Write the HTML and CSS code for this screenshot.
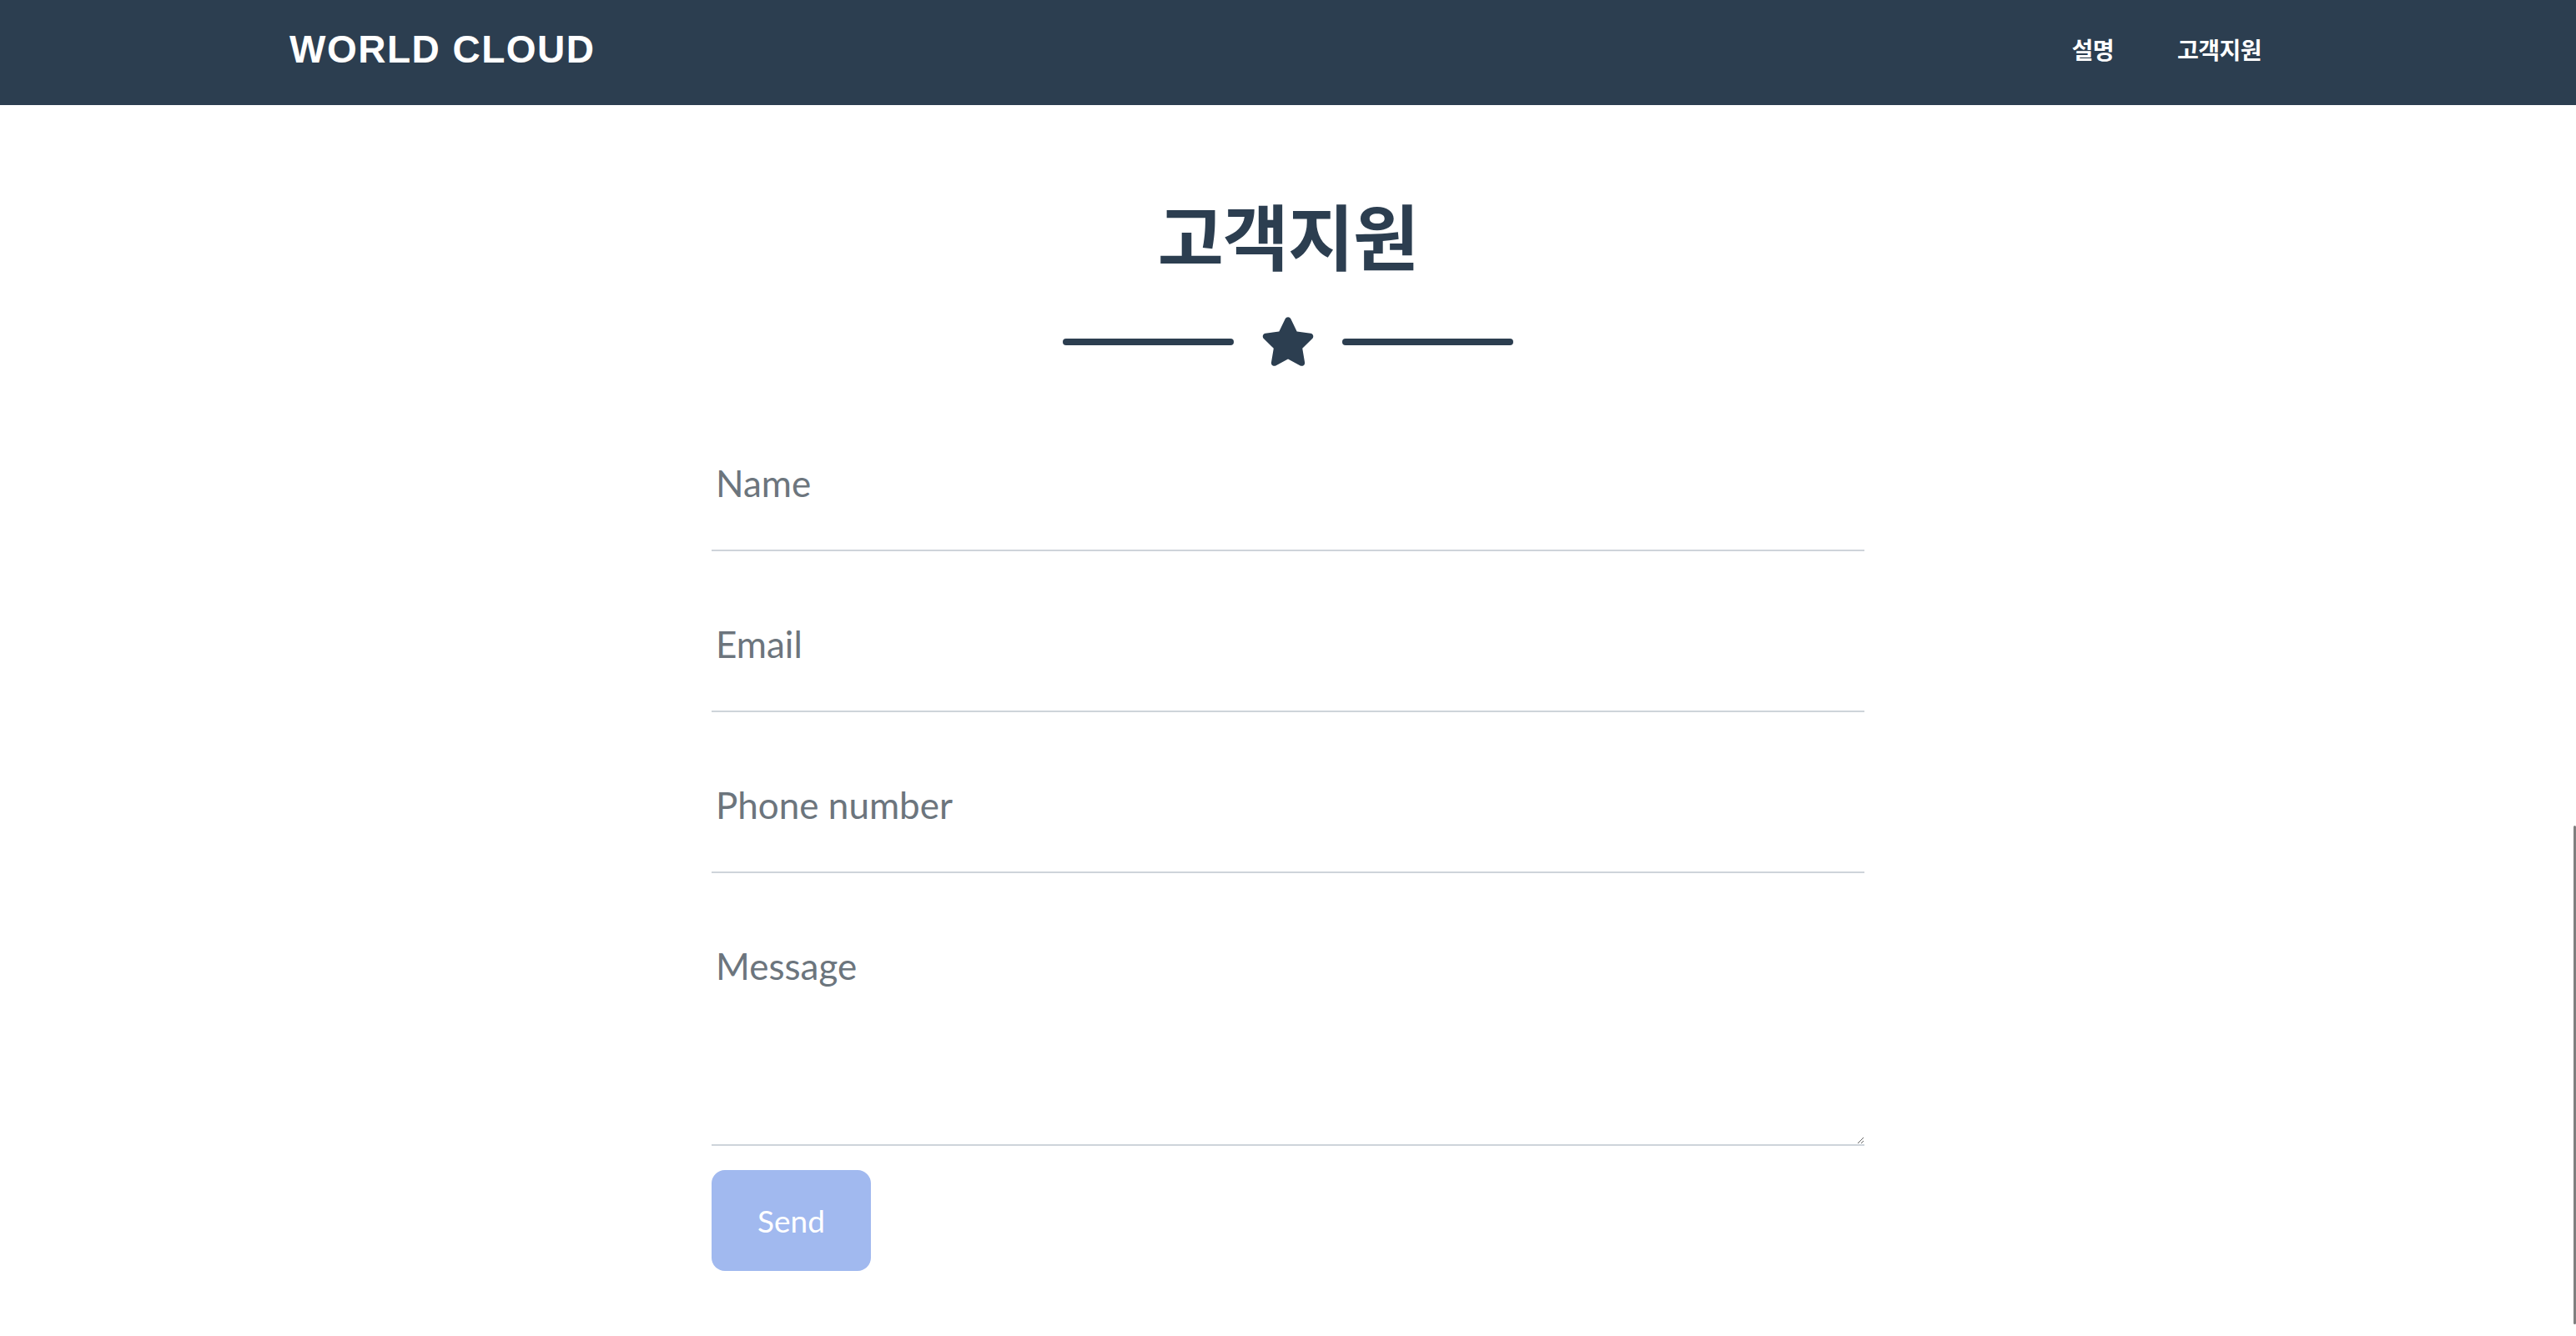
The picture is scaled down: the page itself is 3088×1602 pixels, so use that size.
FILE: index.html
```html
<!DOCTYPE html>
<html lang="ko">
<head>
    <meta charset="utf-8">
    <title>WORLD CLOUD - 고객지원</title>
    <meta name="viewport" content="width=device-width, initial-scale=1">
    <link rel="stylesheet" href="styles.css">
</head>
<body>
<nav class="navbar">
    <div class="navbar-inner">
        <a class="brand" href="#">World Cloud</a>
        <ul class="nav-links">
            <li><a href="#about">설명</a></li>
            <li><a href="#contact">고객지원</a></li>
        </ul>
    </div>
</nav>

<section class="contact" id="contact">
    <h2 class="section-heading">고객지원</h2>
    <div class="divider">
        <div class="divider-line"></div>
        <svg class="divider-icon" viewBox="0 0 576 512" aria-hidden="true">
            <path d="M316.9 18C311.6 7 300.4 0 288.1 0s-23.4 7-28.8 18L195 150.3 51.4 171.5c-12 1.8-22 10.2-25.7 21.7s-.7 24.2 7.9 32.7L137.8 329 113.2 474.7c-2 12 3 24.2 12.9 31.3s23 8 33.8 2.3l128.3-68.5 128.3 68.5c10.8 5.7 23.9 4.9 33.8-2.3s14.9-19.3 12.9-31.3L438.5 329 542.7 225.9c8.6-8.5 11.7-21.2 7.9-32.7s-13.7-19.9-25.7-21.7L381.2 150.3 316.9 18z"/>
        </svg>
        <div class="divider-line"></div>
    </div>

    <form class="contact-form" action="#" method="POST">
        <input class="form-control" type="text" name="name" placeholder="Name">
        <input class="form-control" type="email" name="email" placeholder="Email">
        <input class="form-control" type="tel" name="phone" placeholder="Phone number">
        <textarea class="form-control message" name="message" placeholder="Message"></textarea>
        <button class="btn-send" type="submit" disabled>Send</button>
    </form>
</section>

<div class="scroll-thumb"></div>
</body>
</html>
```

FILE: styles.css
```css
:root {
    --navy: #2c3e50;
    --muted: #6c757d;
    --line: #ced4da;
    --send: #a1b9ef;
}

html {
    box-sizing: border-box;
}

*, *:before, *:after {
    box-sizing: inherit;
}

body {
    margin: 0;
    font-family: Lato, "Noto Sans CJK KR", sans-serif;
    background-color: #fff;
    color: var(--navy);
}

/* top bar */
.navbar {
    height: 126px;
    background-color: var(--navy);
}

.navbar-inner {
    max-width: 2394px;
    height: 100%;
    margin: 0 auto;
    padding-bottom: 8px;
    display: flex;
    align-items: center;
    justify-content: space-between;
}

.brand {
    font-family: "Liberation Sans", Arial, sans-serif;
    font-weight: 700;
    font-size: 46px;
    letter-spacing: 1.5px;
    text-transform: uppercase;
    color: #fff;
    text-decoration: none;
}

.nav-links {
    list-style: none;
    margin: 0;
    padding: 0;
    display: flex;
}

.nav-links a {
    display: block;
    padding: 0 38px;
    font-family: "Noto Sans CJK KR", sans-serif;
    font-weight: 700;
    font-size: 28px;
    letter-spacing: -0.5px;
    color: #fff;
    text-decoration: none;
}

.nav-links li:last-child a {
    padding-right: 30px;
}

/* contact section */
.contact {
    padding-top: 112px;
    padding-bottom: 80px;
}

.section-heading {
    margin: 0;
    text-align: center;
    font-family: "Noto Sans CJK KR", sans-serif;
    font-weight: 700;
    font-size: 86px;
    line-height: 1;
    letter-spacing: -1px;
    color: var(--navy);
}

.divider {
    display: flex;
    align-items: center;
    justify-content: center;
    gap: 32px;
    margin-top: 56px;
}

.divider-line {
    width: 205px;
    height: 8px;
    border-radius: 4px;
    background-color: var(--navy);
}

.divider-icon {
    width: 66px;
    height: 59px;
    fill: var(--navy);
}

.contact-form {
    width: 1382px;
    margin: 29px auto 0;
    display: flex;
    flex-direction: column;
}

.form-control {
    display: block;
    width: 100%;
    height: 193px;
    margin: 0;
    padding: 78px 3px 47px 5px;
    border: 0;
    border-bottom: 2px solid var(--line);
    border-radius: 0;
    background: transparent;
    font-family: Lato, sans-serif;
    font-size: 44px;
    color: #212529;
    outline: none;
}

.form-control::placeholder {
    color: var(--muted);
    opacity: 1;
}

.message {
    height: 327px;
    line-height: 66px;
    resize: vertical;
}

.btn-send {
    align-self: flex-start;
    width: 191px;
    height: 121px;
    margin-top: 29px;
    border: none;
    border-radius: 16px;
    background-color: var(--send);
    color: #fff;
    font-family: Lato, sans-serif;
    font-size: 37px;
}

/* overlay scrollbar as seen in the capture */
.scroll-thumb {
    position: fixed;
    right: 0;
    top: 990px;
    width: 3px;
    height: 598px;
    border-radius: 2px;
    background-color: #7f7f7f;
}
```
